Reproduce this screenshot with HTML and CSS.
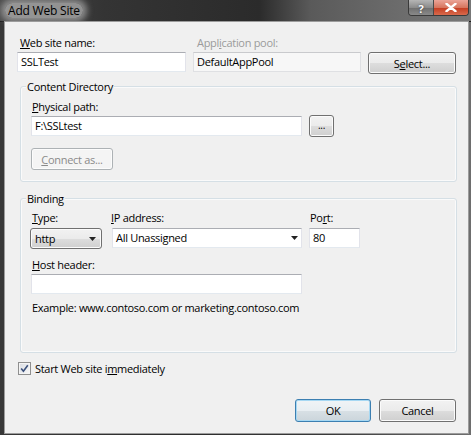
FILE: index.html
```html
<!DOCTYPE html>
<html>
<head>
<meta charset="utf-8">
<link rel="stylesheet" href="styles.css">
</head>
<body>
<div class="window">
  <div class="titlebar">
    <span class="title">Add Web Site</span>
    <div class="caption-buttons">
      <span class="cap help">?</span>
      <span class="cap close"><svg width="12" height="9" viewBox="0 0 12 9"><path d="M1.5 0.8 L10.5 8.2 M10.5 0.8 L1.5 8.2" stroke="#fff" stroke-width="2.4" stroke-linecap="round"/></svg></span>
    </div>
  </div>
  <div class="client">
    <div class="row1">
      <div class="label lbl-site"><u>W</u>eb site name:</div>
      <div class="label lbl-pool disabled">Appl<u>i</u>cation pool:</div>
      <div></div>
      <div class="input">SSLTest</div>
      <div class="input readonly">DefaultAppPool</div>
      <div class="btn select-btn">S<u>e</u>lect...</div>
    </div>

    <div class="group group-content">
      <div class="legend"><span>Content Directory</span></div>
      <div class="label glabel"><u>P</u>hysical path:</div>
      <div class="path-row">
        <div class="input path-input">F:\SSLtest</div>
        <div class="btn browse-btn">...</div>
      </div>
      <div class="btn connect-btn disabled-btn"><u>C</u>onnect as...</div>
    </div>

    <div class="group group-binding">
      <div class="legend"><span>Binding</span></div>
      <div class="binding-row">
        <div class="col col-type">
          <div class="label lbl-type"><u>T</u>ype:</div>
          <div class="combo-btn">http<svg class="arrow" width="7" height="4" viewBox="0 0 7 4"><polygon points="0,0 7,0 3.5,4" fill="#222"/></svg></div>
        </div>
        <div class="col col-ip">
          <div class="label lbl-ip"><u>I</u>P address:</div>
          <div class="input combo-field">All Unassigned<svg class="arrow" width="7" height="4" viewBox="0 0 7 4"><polygon points="0,0 7,0 3.5,4" fill="#222"/></svg></div>
        </div>
        <div class="col col-port">
          <div class="label lbl-port">Po<u>r</u>t:</div>
          <div class="input">80</div>
        </div>
      </div>
      <div class="label glabel host-label"><u>H</u>ost header:</div>
      <div class="input host-input"></div>
      <div class="example">Example: www.contoso.com or marketing.contoso.com</div>
    </div>

    <div class="check-row">
      <span class="checkbox"><svg width="9" height="9" viewBox="0 0 9 9"><path d="M1.2 4.6 L3.4 7.2 L7.8 1.2" fill="none" stroke="#3a4f7a" stroke-width="1.6"/></svg></span>
      <span class="check-label">Start Web site i<u>m</u>mediately</span>
    </div>

    <div class="button-row">
      <div class="btn ok-btn">OK</div>
      <div class="btn cancel-btn">Cancel</div>
    </div>
  </div>
</div>
</body>
</html>
```

FILE: styles.css
```css
html, body {
  margin: 0;
  padding: 0;
  background: #2f2f2f;
}

body {
  font-family: "Open Sans", "Noto Sans", sans-serif;
  font-size: 11px;
  letter-spacing: -0.3px;
  color: #000;
}

u {
  text-decoration: underline;
  text-underline-offset: 1px;
}

.window {
  width: 471px;
  height: 435px;
  display: flex;
  flex-direction: column;
  background: linear-gradient(90deg, #383838 0%, #2c2c2c 40%, #3a3a3a 70%, #6e6e6e 100%);
  overflow: hidden;
}

.titlebar {
  height: 21px;
  flex: none;
  display: flex;
  align-items: flex-start;
  background: linear-gradient(90deg, #4c4c4c 0%, #343434 22%, #2b2b2b 55%, #5a5a5a 66%, #6c6c6c 85%, #777 100%);
  border-bottom: 1px solid #1c1c1c;
}

.title {
  margin: 3px 0 0 5px;
  padding: 0 3px;
  line-height: 15px;
  font-size: 12px;
  letter-spacing: -0.2px;
  color: #000;
  background: rgba(175, 175, 175, 0.75);
  border-radius: 8px;
  box-shadow: 0 0 6px 4px rgba(175, 175, 175, 0.7);
}

.caption-buttons {
  margin-left: auto;
  margin-right: 2px;
  display: flex;
  height: 15px;
  border: 1px solid #3a3a3a;
  border-top: none;
  border-radius: 0 0 4px 4px;
  overflow: hidden;
}

.cap {
  height: 15px;
  display: flex;
  align-items: center;
  justify-content: center;
}

.help {
  width: 25px;
  background: linear-gradient(#b5b5b5, #8c8c8c 50%, #6e6e6e 51%, #8a8a8a);
  color: #fff;
  font-weight: bold;
  font-size: 11px;
  line-height: 13px;
  padding-top: 1px;
  box-sizing: border-box;
  border-right: 1px solid #4a4a4a;
  text-shadow: 0 0 2px #333;
}

.close {
  width: 34px;
  background: linear-gradient(#eba497, #d7765f 50%, #c43b20 51%, #d86a4c);
}

.client {
  flex: 1;
  margin: 0 3px 2px 5px;
  background: #f0f0f0;
  box-shadow: 0 0 0 1px #9c9c9c;
  padding: 13px 12px 0 12px;
  display: flex;
  flex-direction: column;
}

.label {
  height: 15px;
  line-height: 15px;
  white-space: nowrap;
}

.disabled {
  color: #9b9b9b;
}

.row1 {
  display: grid;
  grid-template-columns: 169px 168px 88px;
  column-gap: 7px;
  row-gap: 2px;
  align-items: start;
}

.lbl-site {
  margin-left: 3px;
}

.lbl-pool {
  margin-left: 4px;
}

.input {
  box-sizing: border-box;
  height: 20px;
  line-height: 18px;
  padding: 0 3px;
  background: #fff;
  border: 1px solid #e2e3ea;
  border-top-color: #abadb3;
  border-bottom-color: #e3e9ef;
  white-space: nowrap;
}

.readonly {
  background: #f7f7f7;
  border-color: #dfe0e3;
  border-top-color: #c9cacd;
}

.btn {
  box-sizing: border-box;
  height: 22px;
  display: flex;
  align-items: center;
  justify-content: center;
  border: 1px solid #707070;
  border-radius: 3px;
  background: linear-gradient(#f2f2f2 0%, #ebebeb 50%, #dddddd 51%, #cfcfcf 100%);
  box-shadow: inset 0 0 0 1px #fbfbfb;
  white-space: nowrap;
}

.select-btn {
  height: 22px;
}

.group {
  box-sizing: border-box;
  width: 437px;
  margin-left: 3px;
  border: 1px solid #d5dfe5;
  border-radius: 3px;
  box-shadow: inset 0 0 0 1px #fafafa;
  padding: 0 10px 11px 10px;
}

.group-content {
  margin-top: 12px;
}

.group-binding {
  margin-top: 16px;
  padding-bottom: 37px;
}

.legend {
  height: 15px;
  line-height: 15px;
  margin: -8px 0 0 -5px;
}

.legend span {
  background: #f0f0f0;
  padding: 0 1px;
}

.glabel {
  margin: 5px 0 1px 1px;
}

.path-row {
  display: flex;
  align-items: flex-start;
  gap: 7px;
}

.path-input {
  width: 271px;
  margin-top: 1px;
}

.browse-btn {
  width: 25px;
  height: 22px;
  font-size: 10px;
  padding-bottom: 3px;
}

.connect-btn {
  width: 82px;
  margin-top: 11px;
}

.disabled-btn {
  color: #8a8a8a;
  border-color: #adb2b5;
  background: #f4f4f4;
  box-shadow: inset 0 0 0 1px #fcfcfc;
}

.binding-row {
  display: flex;
  align-items: flex-start;
}

.col {
  display: flex;
  flex-direction: column;
}

.col .label {
  margin: 4px 0 3px 0;
}

.col-type {
  width: 72px;
  margin-left: -1px;
}

.lbl-type {
  margin-left: 2px !important;
}

.col-ip {
  width: 190px;
  margin-left: 10px;
}

.lbl-ip {
  margin-left: -1px !important;
}

.col-port {
  width: 51px;
  margin-left: 7px;
}

.lbl-port {
  margin-left: 1px !important;
}

.combo-btn {
  box-sizing: border-box;
  height: 21px;
  line-height: 19px;
  padding: 0 4px;
  border: 1px solid #707070;
  border-radius: 3px;
  background: linear-gradient(#f2f2f2 0%, #ebebeb 50%, #dddddd 51%, #cfcfcf 100%);
  box-shadow: inset 0 0 0 1px #fbfbfb;
  display: flex;
  align-items: center;
  justify-content: space-between;
}

.combo-btn .arrow {
  margin-right: 1px;
}

.combo-field {
  display: flex;
  align-items: center;
  justify-content: space-between;
}

.host-label {
  margin-top: 8px;
  margin-bottom: 2px;
}

.host-input {
  width: 271px;
}

.example {
  margin: 6px 0 0 1px;
  height: 15px;
  line-height: 15px;
}

.check-row {
  margin: 8px 0 0 1px;
  height: 15px;
  display: flex;
  align-items: center;
}

.checkbox {
  box-sizing: border-box;
  width: 13px;
  height: 13px;
  border: 1px solid #8f8f8f;
  background: linear-gradient(135deg, #d9dce2, #f8f8f8);
  box-shadow: inset 0 0 0 1px #f4f4f4;
  display: flex;
  align-items: center;
  justify-content: center;
}

.check-label {
  margin-left: 4px;
  line-height: 15px;
}

.button-row {
  margin-top: 23px;
  display: flex;
  justify-content: flex-end;
  gap: 8px;
}

.ok-btn {
  width: 76px;
  height: 23px;
  border-color: #3c7fb1;
  box-shadow: inset 0 0 0 1px #a6d8f3;
  background: linear-gradient(#f0f4f6 0%, #e8eef2 50%, #d8e0e5 51%, #cbd5db 100%);
}

.cancel-btn {
  width: 77px;
  height: 23px;
}
```
